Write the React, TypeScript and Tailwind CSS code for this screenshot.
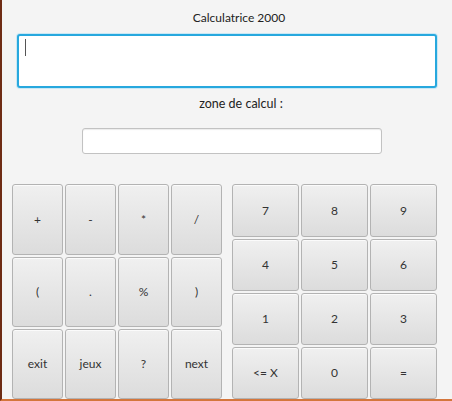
import React from 'react';

const leftKeys = ['+', '-', '*', '/', '(', '.', '%', ')', 'exit', 'jeux', '?', 'next'];
const rightKeys = ['7', '8', '9', '4', '5', '6', '1', '2', '3', '<= X', '0', '='];

const Key: React.FC<{ label: string }> = ({ label }) => (
  <button className="flex items-center justify-center rounded-[3px] border border-[#b3b3b3] bg-linear-to-b from-[#f0f0f0] to-[#dcdcdc] text-[12px] text-[#333333] shadow-[inset_0_1px_0_#fbfbfb]">
    {label}
  </button>
);

const App: React.FC = () => {
  return (
    <div
      className="w-[452px] h-[401px] bg-[#f4f4f4] border-l-2 border-l-[#6e2c14] border-b-2 border-b-[#d4763c] overflow-hidden"
      style={{ fontFamily: 'Lato, "Open Sans", sans-serif' }}
    >
      {/* Header */}
      <p className="pt-[10px] pl-[24px] text-center text-[12px] leading-[16px] text-[#222222]">Calculatrice 2000</p>

      {/* Main input */}
      <div className="ml-[15px] mt-[8px] h-[54px] w-[420px] rounded-[3px] border-2 border-[#27a8de] bg-white pl-[6px] pt-[3px] shadow-[0_0_0_1px_#c9e8f5]">
        <div className="h-[17px] w-px bg-[#555555]" />
      </div>

      {/* Calc zone */}
      <p className="mt-[8px] pl-[28px] text-center text-[12.5px] leading-[16px] text-[#222222]">zone de calcul :</p>
      <div className="ml-[80px] mt-[16px] h-[26px] w-[300px] rounded-[3px] border border-[#c2c2c2] bg-white shadow-[inset_0_1px_1px_#ececec]" />

      {/* Keypads */}
      <div className="mt-[30px] ml-[10px] flex gap-[10px]">
        <div className="grid grid-cols-[repeat(4,51px)] grid-rows-[71px_70px_70px] gap-[2px]">
          {leftKeys.map((k) => (
            <Key key={k} label={k} />
          ))}
        </div>
        <div className="grid grid-cols-[repeat(3,67px)] grid-rows-[53px_52px_52px_52px] gap-[2px]">
          {rightKeys.map((k) => (
            <Key key={k} label={k} />
          ))}
        </div>
      </div>
    </div>
  );
};

export default App;
